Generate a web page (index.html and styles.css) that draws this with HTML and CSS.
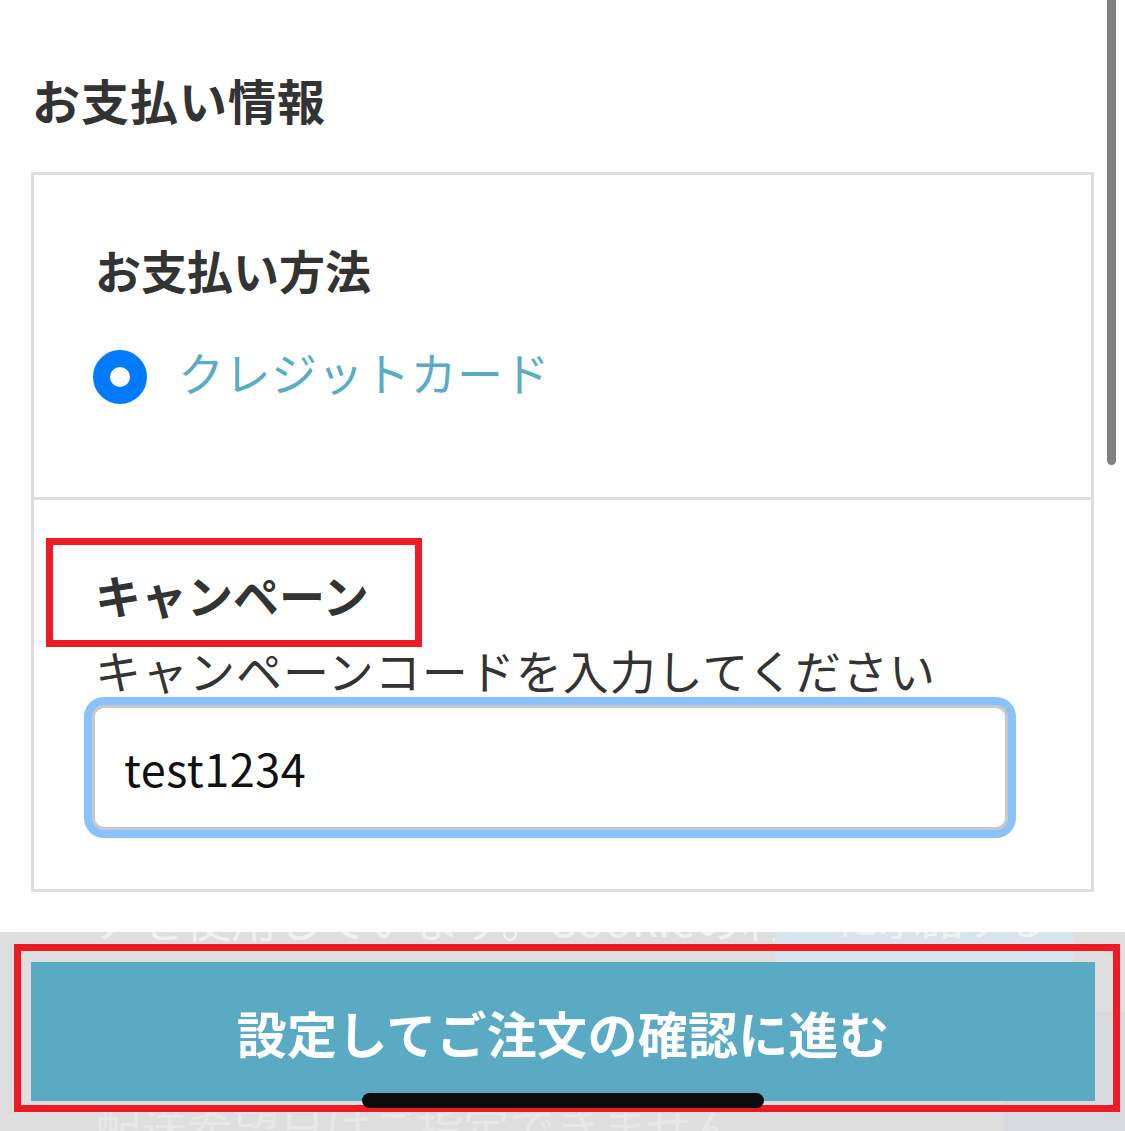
FILE: index.html
```html
<!DOCTYPE html>
<html lang="ja">
<head>
<meta charset="utf-8">
<title>お支払い情報</title>
<link rel="stylesheet" href="styles.css">
</head>
<body>
<main class="page">
  <h2 class="page-title">お支払い情報</h2>
  <div class="panel">
    <section class="panel-section method">
      <h3 class="section-title">お支払い方法</h3>
      <label class="radio-row">
        <span class="radio"></span>
        <span class="radio-label">クレジットカード</span>
      </label>
    </section>
    <section class="panel-section campaign">
      <div class="annot annot-title"></div>
      <h3 class="section-title">キャンペーン</h3>
      <p class="field-label">キャンペーンコードを入力してください</p>
      <div class="input">test1234</div>
    </section>
  </div>
</main>

<div class="scrollbar"></div>

<div class="bottom-layer">
  <div class="cookie">
    <div class="cookie-text">アを使用しています。Cookieの利用</div>
    <div class="cookie-accept">に承諾する</div>
    <div class="cookie-note">配送希望日はご指定できません。</div>
    <div class="cookie-side"></div>
  </div>
  <button class="submit">設定してご注文の確認に進む</button>
  <div class="annot annot-submit"></div>
  <div class="home-indicator"></div>
</div>
</body>
</html>
```

FILE: styles.css
```css
html, body {
  margin: 0;
  padding: 0;
  background: #ffffff;
}
body {
  width: 1125px;
  height: 1131px;
  overflow: hidden;
  position: relative;
  font-family: "Noto Sans CJK JP", "Noto Sans", sans-serif;
  color: #333333;
}
.page {
  padding: 75px 31px 0 31px;
}
.page-title {
  margin: 0 0 0 1px;
  font-size: 48px;
  line-height: 48px;
  font-weight: 700;
  letter-spacing: 1px;
}
.panel {
  margin-top: 49px;
  border: 3px solid #dddddd;
}
.panel-section {
  position: relative;
  padding: 71px 83px 0 61px;
}
.method {
  padding-bottom: 93px;
}
.campaign {
  border-top: 3px solid #dddddd;
  padding-bottom: 59px;
}
.section-title {
  margin: 0;
  font-size: 46px;
  line-height: 46px;
  font-weight: 700;
}
.radio-row {
  display: flex;
  align-items: flex-start;
  gap: 31px;
  margin-top: 58px;
}
.radio {
  box-sizing: border-box;
  width: 54px;
  height: 54px;
  margin-left: -2px;
  border-radius: 50%;
  border: 17px solid #007aff;
  background: #ffffff;
  flex: none;
}
.radio-label {
  margin-top: -2px;
  font-size: 46px;
  line-height: 46px;
  color: #5aacc5;
  letter-spacing: 0.5px;
}
.field-label {
  margin: 29px 0 0 0;
  font-size: 46px;
  line-height: 46px;
  font-weight: 400;
  letter-spacing: 1px;
  white-space: nowrap;
}
.input {
  box-sizing: border-box;
  margin: 13px 0 0 -3px;
  height: 125px;
  border: 3px solid #c8c8c8;
  border-radius: 12px;
  box-shadow: 0 0 0 8px #88c1fb;
  padding-left: 29px;
  display: flex;
  align-items: center;
  font-size: 45px;
  letter-spacing: 0.5px;
  color: #111111;
  background: #ffffff;
}
.annot {
  position: absolute;
  box-sizing: border-box;
  border: 7px solid #ed1c24;
  pointer-events: none;
}
.annot-title {
  left: 12px;
  top: 38px;
  width: 376px;
  height: 109px;
}
.scrollbar {
  position: absolute;
  left: 1107px;
  top: 0;
  width: 9px;
  height: 465px;
  background: #808080;
  border-radius: 0 0 5px 5px;
}
.bottom-layer {
  position: absolute;
  left: 0;
  top: 932px;
  width: 1125px;
  height: 199px;
  background: #dedede;
  overflow: hidden;
}
.cookie {
  position: absolute;
  inset: 0;
}
.cookie-text {
  position: absolute;
  left: 93px;
  top: -38px;
  font-size: 46px;
  line-height: 46px;
  color: #f0f0f0;
  white-space: nowrap;
}
.cookie-accept {
  position: absolute;
  left: 775px;
  top: -38px;
  width: 299px;
  height: 118px;
  box-sizing: border-box;
  padding-left: 62px;
  background: #d8e3ed;
  color: #eef2f5;
  font-size: 42px;
  line-height: 46px;
  white-space: nowrap;
}
.cookie-note {
  position: absolute;
  left: 95px;
  top: 170px;
  font-size: 46px;
  line-height: 46px;
  color: #e7e7e7;
  white-space: nowrap;
}
.cookie-side {
  position: absolute;
  left: 1004px;
  top: 80px;
  width: 121px;
  height: 119px;
  background: #d7dbdf;
}
.submit {
  position: relative;
  display: block;
  margin: 30px 0 0 31px;
  width: 1064px;
  height: 139px;
  border: 0;
  background: #5baac3;
  color: #ffffff;
  font-family: "Noto Sans CJK JP", "Noto Sans", sans-serif;
  font-size: 50px;
  font-weight: 700;
  letter-spacing: 0.3px;
  padding: 0;
  cursor: pointer;
}
.annot-submit {
  left: 14px;
  top: 12px;
  width: 1106px;
  height: 168px;
}
.home-indicator {
  position: absolute;
  left: 362px;
  top: 161px;
  width: 402px;
  height: 15px;
  border-radius: 8px;
  background: #0c0c0c;
}
```
